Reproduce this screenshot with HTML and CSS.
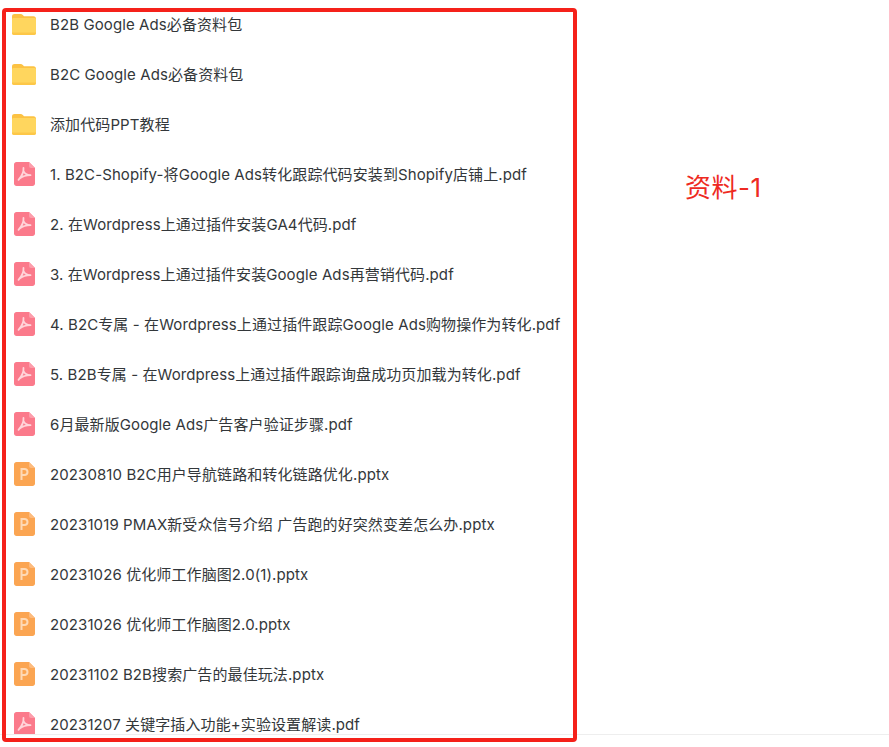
FILE: index.html
```html
<!DOCTYPE html>
<html>

<head>
	<meta charset="utf-8">
	<title>资料-1</title>
	<link rel="stylesheet" href="styles.css">
</head>

<body>

	<svg class="defs" width="0" height="0">
		<symbol id="folder" viewBox="0 0 26 24">
			<path d="M1 4.500C1 2.800 2 2 3.500 2h6c1 0 1.700.4 2.300 1l1.200 1.300h9.500c1.500 0 2.500 1 2.500 2.500v1H1z" fill="#fcc243" />
			<path d="M1 7.500c0-.9.700-1.500 1.500-1.500h21c.8 0 1.500.6 1.500 1.500V21c0 1.200-.9 2-2 2H3c-1.100 0-2-.8-2-2z" fill="#ffd65e" />
			<path d="M1 20.500h24v.5c0 1.200-.9 2-2 2H3c-1.100 0-2-.8-2-2z" fill="#fdc748" />
		</symbol>
		<symbol id="pdf" viewBox="0 0 21 24">
			<path d="M2.500 0H15l6 6v15.500c0 1.400-1.100 2.500-2.500 2.500h-16C1.100 24 0 22.900 0 21.500v-19C0 1.100 1.100 0 2.500 0z" fill="#fb7a8b" />
			<path d="M15 0l6 6h-4c-1.100 0-2-.9-2-2z" fill="#fd9dab" />
			<path d="M9.500 6c.3 3.500-2 8.500-5 11.800M9.500 9c1 2.500 3.500 4 7 4.200-4 .1-7.500.8-10.500 3" fill="none" stroke="#ffd5da" stroke-width="1.800" stroke-linecap="round" stroke-linejoin="round" />
		</symbol>
		<symbol id="ppt" viewBox="0 0 21 24">
			<path d="M2.500 0H15l6 6v15.500c0 1.400-1.100 2.500-2.500 2.500h-16C1.100 24 0 22.900 0 21.500v-19C0 1.100 1.100 0 2.500 0z" fill="#fba552" />
			<path d="M15 0l6 6h-4c-1.100 0-2-.9-2-2z" fill="#fdbb7e" />
			<path d="M7.500 18V7h2.800c2 0 3.200 1.200 3.200 2.900s-1.200 3-3.200 3H7.500" fill="none" stroke="#fed9b6" stroke-width="2" />
		</symbol>
	</svg>

	<div class="page">
		<ul class="files">
			<li><svg class="icon folder"><use href="#folder" /></svg><span>B2B Google Ads必备资料包</span></li>
			<li><svg class="icon folder"><use href="#folder" /></svg><span>B2C Google Ads必备资料包</span></li>
			<li><svg class="icon folder"><use href="#folder" /></svg><span>添加代码PPT教程</span></li>
			<li><svg class="icon"><use href="#pdf" /></svg><span>1. B2C-Shopify-将Google Ads转化跟踪代码安装到Shopify店铺上.pdf</span></li>
			<li><svg class="icon"><use href="#pdf" /></svg><span>2. 在Wordpress上通过插件安装GA4代码.pdf</span></li>
			<li><svg class="icon"><use href="#pdf" /></svg><span>3. 在Wordpress上通过插件安装Google Ads再营销代码.pdf</span></li>
			<li><svg class="icon"><use href="#pdf" /></svg><span>4. B2C专属 - 在Wordpress上通过插件跟踪Google Ads购物操作为转化.pdf</span></li>
			<li><svg class="icon"><use href="#pdf" /></svg><span>5. B2B专属 - 在Wordpress上通过插件跟踪询盘成功页加载为转化.pdf</span></li>
			<li><svg class="icon"><use href="#pdf" /></svg><span>6月最新版Google Ads广告客户验证步骤.pdf</span></li>
			<li><svg class="icon"><use href="#ppt" /></svg><span>20230810 B2C用户导航链路和转化链路优化.pptx</span></li>
			<li><svg class="icon"><use href="#ppt" /></svg><span>20231019 PMAX新受众信号介绍 广告跑的好突然变差怎么办.pptx</span></li>
			<li><svg class="icon"><use href="#ppt" /></svg><span>20231026 优化师工作脑图2.0(1).pptx</span></li>
			<li><svg class="icon"><use href="#ppt" /></svg><span>20231026 优化师工作脑图2.0.pptx</span></li>
			<li><svg class="icon"><use href="#ppt" /></svg><span>20231102 B2B搜索广告的最佳玩法.pptx</span></li>
			<li><svg class="icon"><use href="#pdf" /></svg><span>20231207 关键字插入功能+实验设置解读.pdf</span></li>
		</ul>
		<div class="frame"></div>
		<div class="label">资料-1</div>
	</div>

</body>

</html>
```

FILE: styles.css
```css
* {
	padding: 0px;
	margin: 0px;
	list-style: none;
	box-sizing: border-box;
}

html,
body {
	height: 100%;
	overflow: hidden;
	background-color: #fff;
}

body {
	font-family: "Inter", "Noto Sans CJK SC", sans-serif;
}

.defs {
	display: block;
	height: 0px;
}

.page {
	position: relative;
	height: 747px;
}

.files {
	height: 735px;
	border-bottom: 1px solid #eeeeee;
	overflow: hidden;
}

.files li {
	display: flex;
	align-items: center;
	height: 50px;
	padding-left: 14px;
	font-size: 15px;
	letter-spacing: 0.1px;
	color: #33373a;
	white-space: nowrap;
}

.files li:first-child {
	margin-top: -1px;
}

.files span {
	padding-bottom: 2px;
}

.icon {
	flex: none;
	width: 21px;
	height: 24px;
	margin-right: 15px;
}

.folder {
	width: 26px;
	height: 24px;
	margin-left: -3px;
	margin-right: 13px;
}

.frame {
	position: absolute;
	left: 2px;
	top: 8px;
	width: 575px;
	height: 734px;
	border: 4px solid #f5211a;
	border-radius: 4px;
}

.label {
	position: absolute;
	left: 685px;
	top: 170px;
	font-size: 26px;
	letter-spacing: 0.5px;
	line-height: 36px;
	color: #ee2a22;
}
```
